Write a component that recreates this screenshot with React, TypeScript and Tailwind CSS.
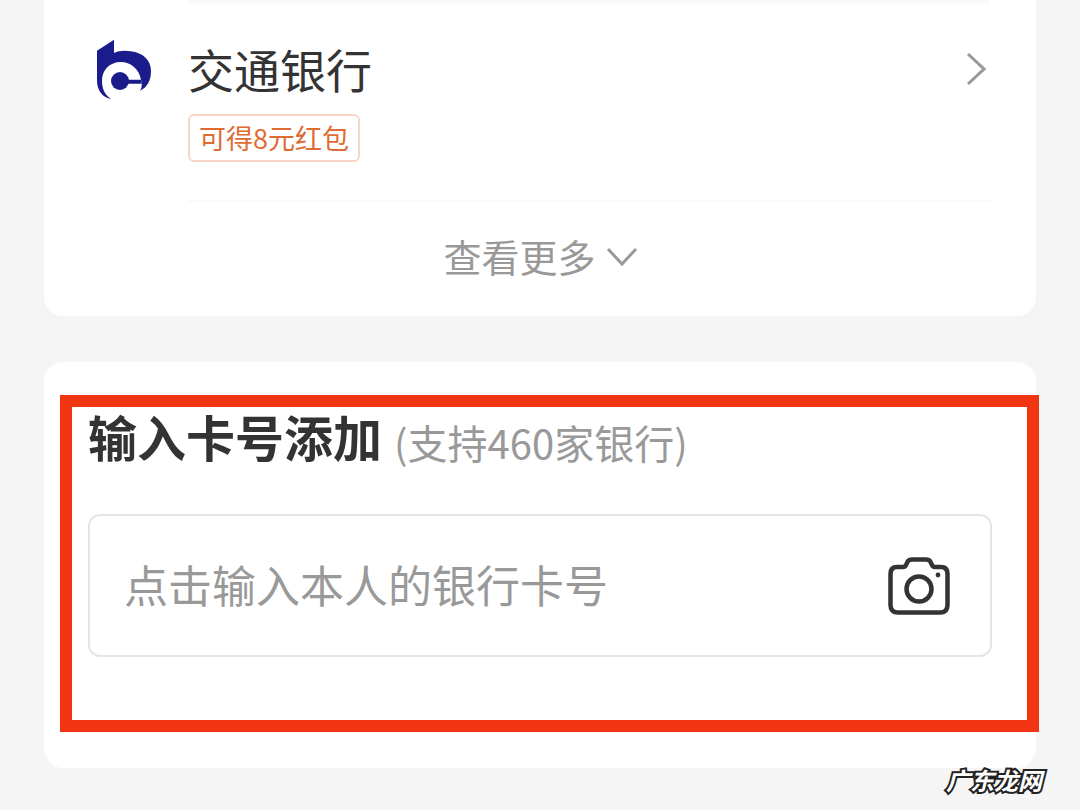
import React, { useState } from 'react';

function BankLogo() {
  return (
    <svg viewBox="15 15 171 183" className="mt-[39px] h-[61px] w-[57px] shrink-0" fill="#1b1c8c" aria-hidden="true">
      <path d="M21 50 L72 17 V57 C85 50 105 49 122 52 C160 56 183 80 183 110 C183 140 172 160 150 170 C154 164 156 157 155 148 L153 138 C148 105 122 84 92 84 C60 84 36 108 36 140 C36 165 45 184 64 195 C38 190 21 170 21 140 Z" />
      <circle cx="90" cy="141" r="27" />
      <path d="M110 137 H153 L155 149 H110 Z" />
    </svg>
  );
}

function CameraIcon() {
  return (
    <svg
      viewBox="0 0 62 58"
      className="h-[58px] w-[62px]"
      fill="none"
      stroke="#333333"
      strokeWidth="4.5"
      strokeLinejoin="round"
      aria-hidden="true"
    >
      <path d="M9 10 H15 Q17 10 18 8 L20 4 Q21 2.5 24 2.5 H38 Q41 2.5 42 4 L44 8 Q45 10 47 10 H53 Q59.5 10 59.5 17 V48 Q59.5 55.5 52 55.5 H10 Q2.5 55.5 2.5 48 V17 Q2.5 10 9 10 Z" />
      <circle cx="31" cy="32" r="12.5" />
      <circle cx="50" cy="18" r="2.4" fill="#333333" stroke="none" />
    </svg>
  );
}

export default function App() {
  const [cardNumber, setCardNumber] = useState('');

  return (
    <div className="relative min-h-screen overflow-hidden bg-[#f5f5f5] px-11 font-['Noto_Sans_CJK_SC',sans-serif]">
      <main className="flex flex-col gap-[46px]">
        <section className="rounded-b-[20px] bg-white pr-[46px] pl-[51px]">
          <a href="#bank" className="flex text-[#333333]">
            <BankLogo />
            <div className="ml-9 flex grow justify-between border-t-4 border-b-2 border-[#fafafa] pt-9 pb-[38px]">
              <div>
                <h2 className="text-[46px] leading-[56px]">交通银行</h2>
                <span className="mt-[18px] inline-block rounded-md border-2 border-[#f8d5c8] px-[9px] text-[27px] leading-[44px] text-[#dd6b32]">
                  可得8元红包
                </span>
              </div>
              <svg
                viewBox="0 0 20 34"
                className="mt-3 mr-1 h-[34px] w-5"
                fill="none"
                stroke="#999999"
                strokeWidth="3"
                aria-hidden="true"
              >
                <path d="M2 2 L18 17 L2 32" />
              </svg>
            </div>
          </a>
          <button
            type="button"
            className="flex h-[114px] w-full items-center justify-center gap-2.5 pr-1 pb-2 text-[38px] text-[#999999]"
          >
            查看更多
            <svg viewBox="0 0 32 20" className="mt-1 h-5 w-8" fill="none" stroke="#999999" strokeWidth="3" aria-hidden="true">
              <path d="M2 2 L16 17 L30 2" />
            </svg>
          </button>
        </section>

        <section className="relative rounded-[20px] bg-white px-11 pt-[38px] pb-[111px]">
          <div className="pointer-events-none absolute top-[33px] -right-[3px] bottom-9 left-4 border-12 border-[#f13412]" />
          <label htmlFor="card-number" className="flex h-[72px] items-center gap-3 leading-[72px]">
            <span className="text-[49px] font-bold text-[#333333]">输入卡号添加</span>
            <span className="pt-3 text-[40px] text-[#999999]">(支持460家银行)</span>
          </label>
          <div className="mt-[42px] flex h-[143px] items-center rounded-xl border-2 border-[#e4e6e6] pr-10 pl-[34px]">
            <input
              id="card-number"
              type="text"
              inputMode="numeric"
              value={cardNumber}
              onChange={(e) => setCardNumber(e.target.value)}
              placeholder="点击输入本人的银行卡号"
              className="h-20 min-w-0 grow bg-transparent pb-1 text-[44px] text-[#333333] outline-none placeholder:text-[#999999]"
            />
            <button type="button" aria-label="拍照识别银行卡">
              <CameraIcon />
            </button>
          </div>
        </section>
      </main>

      <span className="absolute right-[38px] bottom-3 text-2xl leading-9 font-bold text-white italic [-webkit-text-stroke:4px_#222222] [paint-order:stroke_fill]">
        广东龙网
      </span>
    </div>
  );
}
